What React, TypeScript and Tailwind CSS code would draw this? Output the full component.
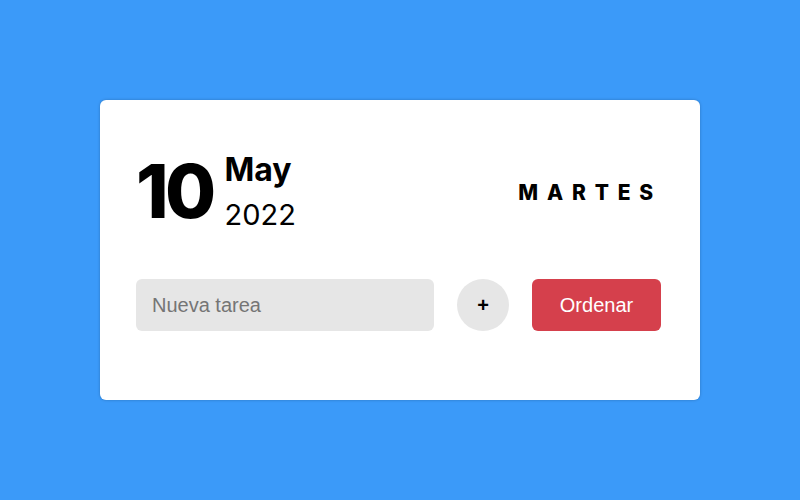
export default function App() {
    return (
        <div className="min-h-screen bg-[#3b9af9] flex items-center justify-center">
            <div className="w-[600px] h-[300px] bg-white rounded-[6px] shadow-[0_0_3px_rgba(0,0,0,0.25)] px-[36px] pt-[47px] font-['Inter',sans-serif] text-black">
                <div className="flex items-center justify-between pr-[2px]">
                    <div className="flex items-start">
                        <div className="text-[74px] font-extrabold leading-[80px] tracking-[-0.05em] mt-[4px]">10</div>
                        <div className="ml-[12px]">
                            <div className="text-[32px] font-bold leading-[45px]">May</div>
                            <div className="text-[29px] font-normal leading-[45px]">2022</div>
                        </div>
                    </div>
                    <div className="text-[21px] font-extrabold tracking-[0.42em] leading-none">MARTES</div>
                </div>

                <div className="flex items-center gap-[23px] mt-[42px] font-['Liberation_Sans',sans-serif]">
                    <input
                        type="text"
                        placeholder="Nueva tarea"
                        className="w-[298px] h-[52px] rounded-[6px] bg-[#e6e6e6] px-[16px] text-[20px] text-black placeholder:text-[#757575] outline-none"
                    />
                    <button className="w-[52px] h-[52px] rounded-full bg-[#e6e6e6] text-[20px] font-bold text-black flex items-center justify-center">
                        +
                    </button>
                    <button className="w-[129px] h-[52px] rounded-[6px] bg-[#d5404c] text-[20px] text-white">
                        Ordenar
                    </button>
                </div>
            </div>
        </div>
    );
}
